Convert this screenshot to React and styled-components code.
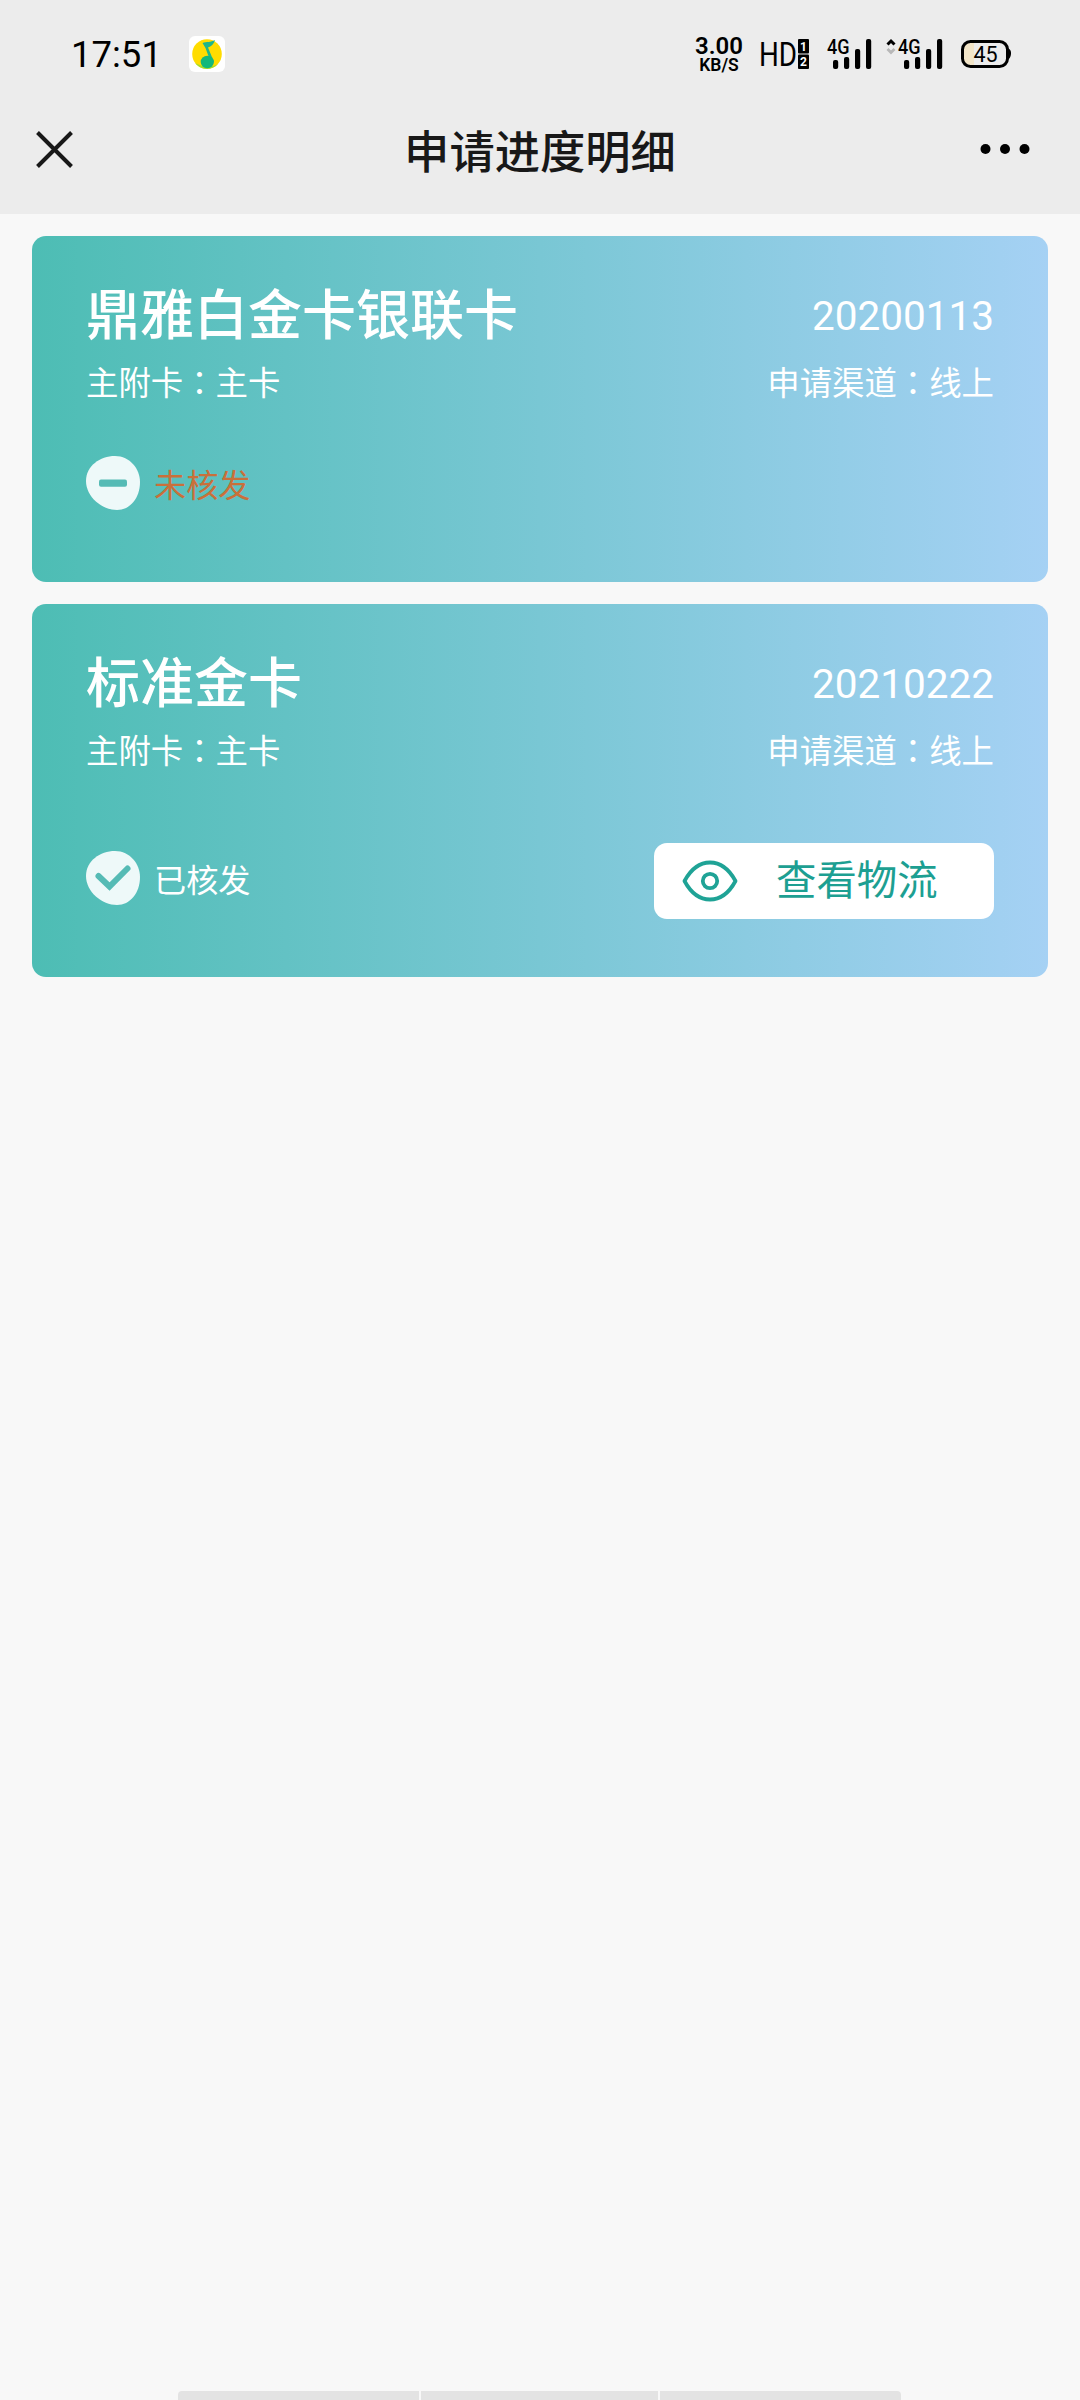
import React from 'react';
import styled, { createGlobalStyle } from 'styled-components';

const cjk = "'Noto Sans CJK SC', 'Noto Sans', sans-serif";
const latin = "Roboto, 'Noto Sans CJK SC', sans-serif";

const GlobalStyle = createGlobalStyle`
  * {
    box-sizing: border-box;
  }

  body {
    margin: 0;
    background: #f8f8f8;
    font-family: ${cjk};
  }
`;

const Page = styled.div`
  width: 1080px;
  height: 2400px;
  display: flex;
  flex-direction: column;
  overflow: hidden;
  background: #f8f8f8;
`;

const Header = styled.header`
  height: 214px;
  background: #ececec;
`;

const StatusBar = styled.div`
  height: 108px;
  padding: 0 69px 0 71px;
  display: flex;
  align-items: center;
  justify-content: space-between;
  font-family: ${latin};
  color: #000;
`;

const StatusGroup = styled.div`
  display: flex;
  align-items: center;
`;

const Clock = styled.span`
  width: 118px;
  padding-top: 1px;
  font-size: 36.5px;
  line-height: 44px;
`;

const Speed = styled.div`
  width: 50px;
  margin-right: 13px;
  padding-top: 2px;
  display: flex;
  flex-direction: column;
  align-items: center;
  font-weight: 600;
  font-size: 24px;
  line-height: 20px;

  small {
    font-size: 17.5px;
    line-height: 18px;
  }
`;

const NavBar = styled.nav`
  height: 82px;
  padding: 0 50px 0 36px;
  display: grid;
  grid-template-columns: 50px 1fr 50px;
  align-items: center;
`;

const NavTitle = styled.h1`
  margin: 0;
  padding-left: 14px;
  font-size: 45.3px;
  line-height: 60px;
  font-weight: 500;
  text-align: center;
  color: #181818;
`;

const CardList = styled.main`
  flex: 1;
  padding: 22px 32px 0;
  display: flex;
  flex-direction: column;
  gap: 22px;
`;

const Card = styled.section`
  height: ${({ $tall }) => ($tall ? 373 : 346)}px;
  padding: 46px 54px 0;
  border-radius: 14px;
  background: linear-gradient(90deg, #4dbdb4, #a5d1f4);
  color: #fff;
`;

const Row = styled.div`
  display: flex;
  align-items: center;
  justify-content: space-between;
`;

const CardName = styled.h2`
  margin: 0;
  font-size: 54px;
  line-height: 60px;
  font-weight: 500;
`;

const CardDate = styled.span`
  padding-top: 9px;
  font-family: ${latin};
  font-size: 40.5px;
  line-height: 51px;
`;

const Info = styled.span`
  margin: 19px 0 1px;
  font-size: 32.4px;
  line-height: 40px;
`;

// the TC face keeps the full-width colon centred in its cell
const Colon = styled.span`
  font-family: 'Noto Sans CJK TC', sans-serif;
`;

const StatusRow = styled(Row)`
  height: 76px;
  margin-top: ${({ $top }) => $top}px;
`;

const Status = styled.div`
  display: flex;
  align-items: center;
  gap: 14px;
  margin-top: ${({ $rejected }) => ($rejected ? 0 : -6)}px;
  font-size: 32.2px;
  line-height: 40px;
  color: ${({ $rejected }) => ($rejected ? '#c9703a' : '#fff')};
`;

const TrackButton = styled.button`
  width: 340px;
  height: 76px;
  padding: 0 0 0 28px;
  display: flex;
  align-items: center;
  gap: 38px;
  border: 0;
  border-radius: 13px;
  background: #fff;
  color: #1d9f92;
  font-family: ${cjk};
  font-size: 40.4px;
  line-height: 50px;

  span {
    margin-top: -6px;
  }
`;

const NavHint = styled.div`
  width: 723px;
  height: 9px;
  margin-left: 178px;
  display: grid;
  grid-template-columns: 241px 237px 1fr;
  gap: 2px;
  border-radius: 4px 4px 0 0;
  overflow: hidden;

  i {
    background: #e3e3e3;
  }
`;

const MusicIcon = () => (
  <svg width="36" height="36" viewBox="0 0 36 36">
    <rect width="36" height="36" rx="6" fill="#fff" />
    <circle cx="18" cy="18" r="14.8" fill="#ffdc00" />
    <path d="M6 27a14.800 14.800 0 0 0 23 1c-4 3-14 4-23-1z" fill="#a5dd2c" />
    <path d="M13.500 7c4-1.500 8-.500 12.500-3-1 4-4 6.500-7 7.500l6 14.500-3 1-5.500-15z" fill="#1fb58a" />
    <ellipse cx="18.300" cy="26" rx="6.600" ry="6.200" fill="#12b87a" />
  </svg>
);

const Bars = ({ x }) => (
  <g fill="#000">
    <rect x={x} y="21" width="5.200" height="9" rx="2" />
    <rect x={x + 11} y="18" width="5.200" height="12" rx="2" />
    <rect x={x + 22} y="10" width="5.200" height="20" rx="2" />
    <rect x={x + 33} y="0" width="5.200" height="30" rx="2" />
  </g>
);

// HD badge, both SIM signals and the battery
const SignalIcons = () => (
  <svg width="254" height="44" viewBox="-4 -7 254 44" fontFamily="Roboto, sans-serif">
    <text transform="translate(-2 27) scale(.83 1)" fontSize="33.500">HD</text>
    <rect x="37" y="0" width="11" height="14.500" rx="1" />
    <rect x="37" y="15.500" width="11" height="14.500" rx="1" />
    <text x="42.500" y="11.500" fontSize="12" fontWeight="700" fill="#fff" textAnchor="middle">1</text>
    <text x="42.500" y="27" fontSize="12" fontWeight="700" fill="#fff" textAnchor="middle">2</text>

    <text transform="translate(66 15) scale(.88 1)" fontSize="20.500" fontWeight="500">4G</text>
    <Bars x={72} />

    <path d="M126.500 5.500l3.500-3.500 3.500 3.500" fill="none" stroke="#000" strokeWidth="3" />
    <path d="M126.500 10l3.500 3.500 3.500-3.500" fill="none" stroke="#b8b8b8" strokeWidth="2.800" />
    <text transform="translate(137 15) scale(.88 1)" fontSize="20.500" fontWeight="500">4G</text>
    <Bars x={143} />

    <path d="M213 3h-4a7 7 0 0 0-7 7v9a7 7 0 0 0 7 7h4z" fill="#f2e5c8" />
    <rect x="201.500" y="2.500" width="45" height="25" rx="8" fill="none" stroke="#000" strokeWidth="3" />
    <path d="M246 9q4.500 1 4 6t-4 6z" />
    <text x="224.500" y="22.500" fontSize="21.500" textAnchor="middle">45</text>
  </svg>
);

const CloseIcon = () => (
  <svg width="37" height="37" viewBox="0 0 37 37" stroke="#181818" strokeWidth="4">
    <path d="M1.500 1.500l34 34M35.500 1.500l-34 34" />
  </svg>
);

const MoreIcon = () => (
  <svg width="50" height="12" viewBox="0 0 50 12">
    <circle cx="5.500" cy="6" r="5" />
    <circle cx="25" cy="6" r="5" />
    <circle cx="44.500" cy="6" r="5" />
  </svg>
);

const StatusIcon = ({ rejected }) => (
  <svg width="54" height="54" viewBox="0 0 54 54">
    <path d="M29 0C44 0 54 13 54 26C54 42 44 54 31 54C16 54 0 41 0 25C0 10 14 0 29 0z" fill="#eef9f9" />
    {rejected ? (
      <rect x="13" y="23.500" width="28" height="7.200" rx="2" fill="#55bbb5" />
    ) : (
      <path d="M12.500 25l11 10.500 18-18" fill="none" stroke="#55bbb5" strokeWidth="6" strokeLinecap="round" />
    )}
  </svg>
);

const EyeIcon = () => (
  <svg width="56" height="42" viewBox="0 0 56 42" fill="none" stroke="#1fa396" strokeWidth="3.800">
    <path d="M2.500 21C9 9 17 2.500 28 2.500s19 6.500 25.500 18.500C47 33 39 39.500 28 39.500S9 33 2.500 21z" strokeLinejoin="round" />
    <circle cx="28" cy="21" r="7.200" />
  </svg>
);

const applications = [
  { name: '鼎雅白金卡银联卡', date: '20200113', status: '未核发', rejected: true },
  { name: '标准金卡', date: '20210222', status: '已核发', rejected: false },
];

const ApplicationCard = ({ name, date, status, rejected }) => (
  <Card $tall={!rejected}>
    <Row>
      <CardName>{name}</CardName>
      <CardDate>{date}</CardDate>
    </Row>
    <Row>
      <Info>主附卡<Colon>：</Colon>主卡</Info>
      <Info>申请渠道<Colon>：</Colon>线上</Info>
    </Row>
    <StatusRow $top={rejected ? 43 : 73}>
      <Status $rejected={rejected}>
        <StatusIcon rejected={rejected} />
        <span>{status}</span>
      </Status>
      {!rejected && (
        <TrackButton>
          <EyeIcon />
          <span>查看物流</span>
        </TrackButton>
      )}
    </StatusRow>
  </Card>
);

const App = () => (
  <>
    <GlobalStyle />
    <Page>
      <Header>
        <StatusBar>
          <StatusGroup>
            <Clock>17:51</Clock>
            <MusicIcon />
          </StatusGroup>
          <StatusGroup>
            <Speed>
              3.00
              <small>KB/S</small>
            </Speed>
            <SignalIcons />
          </StatusGroup>
        </StatusBar>
        <NavBar>
          <CloseIcon />
          <NavTitle>申请进度明细</NavTitle>
          <MoreIcon />
        </NavBar>
      </Header>
      <CardList>
        {applications.map((item) => (
          <ApplicationCard key={item.date} {...item} />
        ))}
      </CardList>
      <NavHint>
        <i />
        <i />
        <i />
      </NavHint>
    </Page>
  </>
);

export default App;
